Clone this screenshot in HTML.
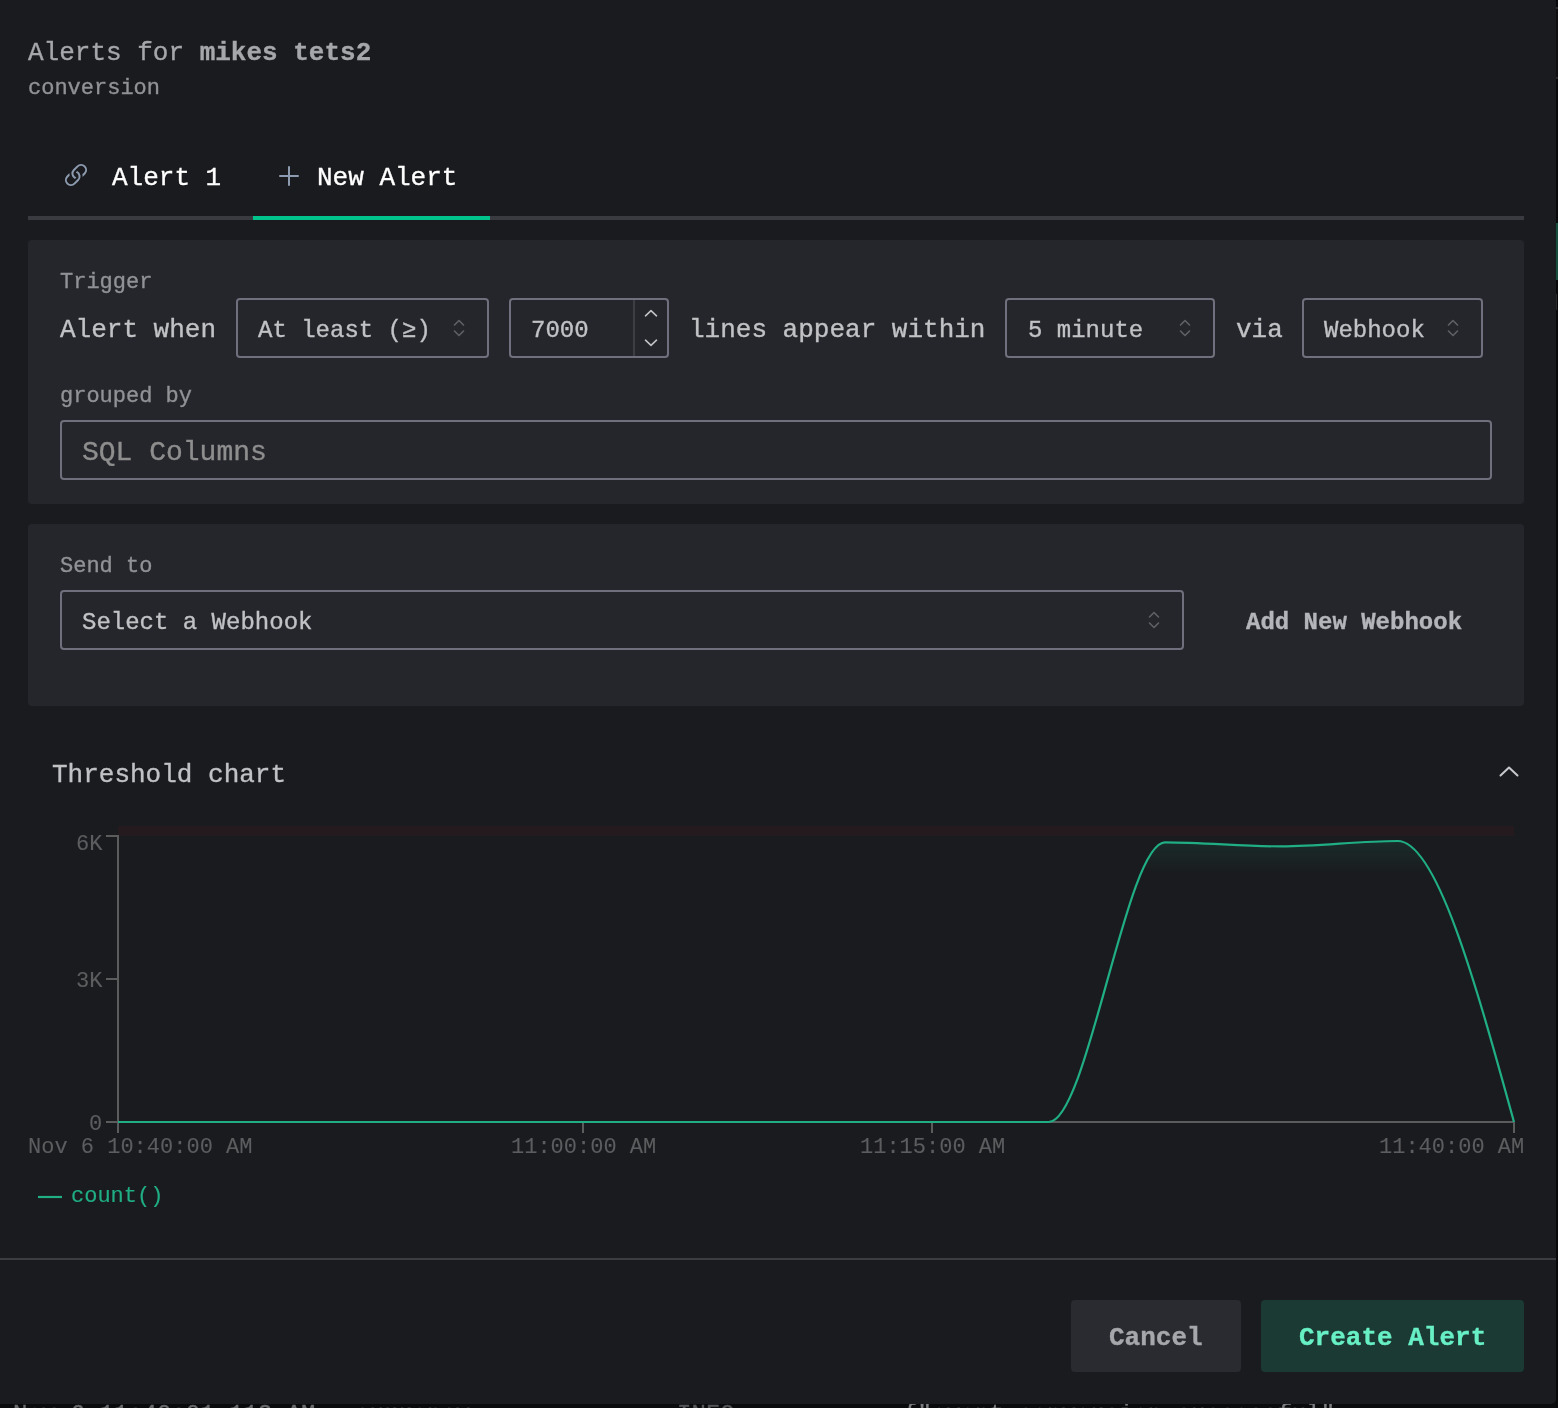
<!DOCTYPE html>
<html><head><meta charset="utf-8">
<style>
html,body{margin:0;padding:0;}
body{width:1558px;height:1408px;background:#0a0b0d;position:relative;overflow:hidden;font-family:"Liberation Mono",monospace;}
.t{position:absolute;line-height:1;white-space:pre;-webkit-text-stroke:0.35px currentColor;will-change:transform;}
.b{position:absolute;box-sizing:border-box;}
svg{position:absolute;left:0;top:0;}
</style></head><body>
<div class="t" style="left:13px;top:1402.61px;font-size:24px;color:#6a6b6e;">Nov 6 11:40:01.113 AM</div>
<div class="t" style="left:355px;top:1402.61px;font-size:24px;color:#7c7d80;">currency</div>
<div class="t" style="left:677px;top:1402.61px;font-size:24px;color:#55565a;">INFO</div>
<div class="t" style="left:903px;top:1402.61px;font-size:24px;color:#7c7d80;">{"event conversion successful"</div>
<div class="b" style="left:1556px;top:0px;width:2px;height:1408px;background:#08090b;"></div>
<div class="b" style="left:1556px;top:7px;width:2px;height:2px;background:#2e2d31;"></div>
<div class="b" style="left:1556px;top:9px;width:2px;height:68px;background:#0f0f10;"></div>
<div class="b" style="left:1556px;top:77px;width:2px;height:2px;background:#2c2b30;"></div>
<div class="b" style="left:1556px;top:223px;width:2px;height:57px;background:#154f3c;"></div>
<div class="b" style="left:1556px;top:294px;width:1px;height:16px;background:#2a2a2c;"></div>
<div class="b" style="left:-6px;top:-3px;width:1562px;height:1407px;background:#1a1b1e;border-radius:5px;"></div>
<div class="t" style="left:28px;top:40.28px;font-size:26px;color:#a6a7ab;">Alerts for <b>mikes tets2</b></div>
<div class="t" style="left:28px;top:77.95px;font-size:22px;color:#909296;">conversion</div>
<div class="t" style="left:112px;top:165.28px;font-size:26px;color:#ffffff;">Alert 1</div>
<div class="t" style="left:317px;top:165.08px;font-size:26px;color:#ffffff;">New Alert</div>
<div class="b" style="left:28px;top:216px;width:1496px;height:4px;background:#3a3b40;"></div>
<div class="b" style="left:253px;top:216px;width:237px;height:4px;background:#00c48c;"></div>
<div class="b" style="left:28px;top:240px;width:1496px;height:264px;background:#25262b;border-radius:4px;"></div>
<div class="t" style="left:60px;top:272.45px;font-size:22px;color:#909296;">Trigger</div>
<div class="t" style="left:60px;top:317.08px;font-size:26px;color:#c1c2c5;">Alert when</div>
<div class="b" style="left:236px;top:298px;width:253px;height:60px;border:2px solid #706f7d;border-radius:4px;"></div>
<div class="t" style="left:258px;top:318.61px;font-size:24px;color:#c1c2c5;">At least (≥)</div>
<div class="b" style="left:509px;top:298px;width:160px;height:60px;border:2px solid #706f7d;border-radius:4px;"></div>
<div class="b" style="left:633px;top:300px;width:2px;height:56px;background:#3d3e44;"></div>
<div class="t" style="left:531px;top:319.21px;font-size:24px;color:#c1c2c5;">7000</div>
<div class="t" style="left:689px;top:317.08px;font-size:26px;color:#c1c2c5;">lines appear within</div>
<div class="b" style="left:1005px;top:298px;width:210px;height:60px;border:2px solid #706f7d;border-radius:4px;"></div>
<div class="t" style="left:1028px;top:318.61px;font-size:24px;color:#c1c2c5;">5 minute</div>
<div class="t" style="left:1236px;top:317.08px;font-size:26px;color:#c1c2c5;">via</div>
<div class="b" style="left:1302px;top:298px;width:181px;height:60px;border:2px solid #706f7d;border-radius:4px;"></div>
<div class="t" style="left:1324px;top:318.61px;font-size:24px;color:#c1c2c5;">Webhook</div>
<div class="t" style="left:60px;top:385.85px;font-size:22px;color:#909296;">grouped by</div>
<div class="b" style="left:60px;top:420px;width:1432px;height:60px;border:2px solid #706f7d;border-radius:4px;"></div>
<div class="t" style="left:82px;top:438.95px;font-size:28px;color:#8e8e8e;">SQL Columns</div>
<div class="b" style="left:28px;top:524px;width:1496px;height:182px;background:#25262b;border-radius:4px;"></div>
<div class="t" style="left:60px;top:555.95px;font-size:22px;color:#909296;">Send to</div>
<div class="b" style="left:60px;top:590px;width:1124px;height:60px;border:2px solid #706f7d;border-radius:4px;"></div>
<div class="t" style="left:82px;top:610.61px;font-size:24px;color:#c1c2c5;">Select a Webhook</div>
<div class="t" style="left:1246px;top:610.61px;font-size:24px;color:#b4b5bb;font-weight:700;">Add New Webhook</div>
<div class="t" style="left:52px;top:762.08px;font-size:26px;color:#c1c2c5;">Threshold chart</div>
<div class="t" style="left:76px;top:834.15px;font-size:22px;color:#5c5d5f;-webkit-text-stroke:0.1px currentColor;">6K</div>
<div class="t" style="left:76px;top:970.65px;font-size:22px;color:#5c5d5f;-webkit-text-stroke:0.1px currentColor;">3K</div>
<div class="t" style="left:89px;top:1113.65px;font-size:22px;color:#5c5d5f;-webkit-text-stroke:0.1px currentColor;">0</div>
<div class="t" style="left:28px;top:1137.45px;font-size:22px;color:#5c5d5f;-webkit-text-stroke:0.1px currentColor;">Nov 6 10:40:00 AM</div>
<div class="t" style="left:511px;top:1136.85px;font-size:22px;color:#5c5d5f;-webkit-text-stroke:0.1px currentColor;">11:00:00 AM</div>
<div class="t" style="left:860px;top:1136.85px;font-size:22px;color:#5c5d5f;-webkit-text-stroke:0.1px currentColor;">11:15:00 AM</div>
<div class="t" style="left:1379px;top:1136.85px;font-size:22px;color:#5c5d5f;-webkit-text-stroke:0.1px currentColor;">11:40:00 AM</div>
<div class="t" style="left:71px;top:1186.15px;font-size:22px;color:#20ae85;-webkit-text-stroke:0.15px currentColor;">count()</div>
<div class="b" style="left:0px;top:1258px;width:1556px;height:2px;background:#3c3d42;"></div>
<div class="b" style="left:1071px;top:1300px;width:170px;height:72px;background:#2a2b30;border-radius:4px;"></div>
<div class="t" style="left:1109px;top:1325.08px;font-size:26px;color:#a6a7ab;font-weight:700;">Cancel</div>
<div class="b" style="left:1261px;top:1300px;width:263px;height:72px;background:#1b3a33;border-radius:4px;"></div>
<div class="t" style="left:1299px;top:1325.08px;font-size:26px;color:#68f0c5;font-weight:700;">Create Alert</div>
<svg width="1558" height="1408" viewBox="0 0 1558 1408">
<defs><linearGradient id="gf" x1="0" y1="0" x2="0" y2="1">
<stop offset="0" stop-color="#20ae85" stop-opacity="0.12"/><stop offset="0.12" stop-color="#20ae85" stop-opacity="0"/></linearGradient></defs>
<!-- link icon -->
<g transform="translate(60,160) scale(2)" fill="#8d9bb0">
<path d="M4.715 6.542 3.343 7.914a3 3 0 1 0 4.243 4.243l1.828-1.829A3 3 0 0 0 8.586 5.5L8 6.086a1 1 0 0 0-.154.199 2 2 0 0 1 .861 3.337L6.88 11.45a2 2 0 1 1-2.83-2.83l.793-.792a4 4 0 0 1-.128-1.287z"/>
<path d="M6.586 4.672A3 3 0 0 0 7.414 9.5l.775-.776a2 2 0 0 1-.896-3.346L9.12 3.55a2 2 0 1 1 2.83 2.83l-.793.792c.112.42.155.855.128 1.287l1.372-1.372a3 3 0 1 0-4.243-4.243z"/>
</g>
<!-- plus -->
<g stroke="#8d9bb0" stroke-width="2" stroke-linecap="round"><path d="M289 167V185M280 176H298"/></g>
<!-- select chevrons -->
<g fill="none" stroke="#5f6168" stroke-width="1.6" stroke-linecap="round" stroke-linejoin="round">
<path d="M454.5 325L459 320.5L463.5 325M454.5 331L459 335.5L463.5 331"/>
<path d="M1180.5 325L1185 320.5L1189.5 325M1180.5 331L1185 335.5L1189.5 331"/>
<path d="M1448.5 325L1453 320.5L1457.5 325M1448.5 331L1453 335.5L1457.5 331"/>
<path d="M1149.5 617L1154 612.5L1158.5 617M1149.5 623L1154 627.5L1158.5 623"/>
</g>
<g fill="none" stroke="#c1c2c5" stroke-width="1.6" stroke-linecap="round" stroke-linejoin="round">
<path d="M645.5 315.8L651 310.6L656.5 315.8M645.5 340.2L651 345.4L656.5 340.2"/>
</g>
<!-- chevron up -->
<path d="M1500.5 775.5L1509 767.5L1517.5 775.5" fill="none" stroke="#c8c9ce" stroke-width="2" stroke-linecap="round" stroke-linejoin="round"/>
<!-- threshold band -->
<rect x="118" y="826" width="1396" height="10" fill="#251a1d"/>
<!-- axes -->
<g stroke="#5b5c5c" stroke-width="2" fill="none">
<path d="M118 835V1133M106 836H118M106 979H118M106 1122H118M118 1122H1514M583 1122V1133M932 1122V1133M1514 1122V1133"/>
</g>
<path d="M118.00,1122.00C156.78,1122.00,195.56,1122.00,234.33,1122.00C273.11,1122.00,311.89,1122.00,350.67,1122.00C389.44,1122.00,428.22,1122.00,467.00,1122.00C505.78,1122.00,544.56,1122.00,583.33,1122.00C622.11,1122.00,660.89,1122.00,699.67,1122.00C738.44,1122.00,777.22,1122.00,816.00,1122.00C854.78,1122.00,893.56,1122.00,932.33,1122.00C971.11,1122.00,1009.89,1122.00,1048.67,1122.00C1087.44,1122.00,1126.22,842.30,1165.00,842.30C1203.78,842.30,1242.56,846.40,1281.33,846.40C1320.11,846.40,1358.89,841.00,1397.67,841.00C1436.44,841.00,1475.22,981.50,1514.00,1122.00L1514,1122L118,1122Z" fill="url(#gf)"/>
<path d="M118.00,1122.00C156.78,1122.00,195.56,1122.00,234.33,1122.00C273.11,1122.00,311.89,1122.00,350.67,1122.00C389.44,1122.00,428.22,1122.00,467.00,1122.00C505.78,1122.00,544.56,1122.00,583.33,1122.00C622.11,1122.00,660.89,1122.00,699.67,1122.00C738.44,1122.00,777.22,1122.00,816.00,1122.00C854.78,1122.00,893.56,1122.00,932.33,1122.00C971.11,1122.00,1009.89,1122.00,1048.67,1122.00C1087.44,1122.00,1126.22,842.30,1165.00,842.30C1203.78,842.30,1242.56,846.40,1281.33,846.40C1320.11,846.40,1358.89,841.00,1397.67,841.00C1436.44,841.00,1475.22,981.50,1514.00,1122.00" fill="none" stroke="#20ae85" stroke-width="2.2"/>
<!-- legend -->
<path d="M38 1197H62" stroke="#20ae85" stroke-width="2.2"/>
</svg>
</body></html>
